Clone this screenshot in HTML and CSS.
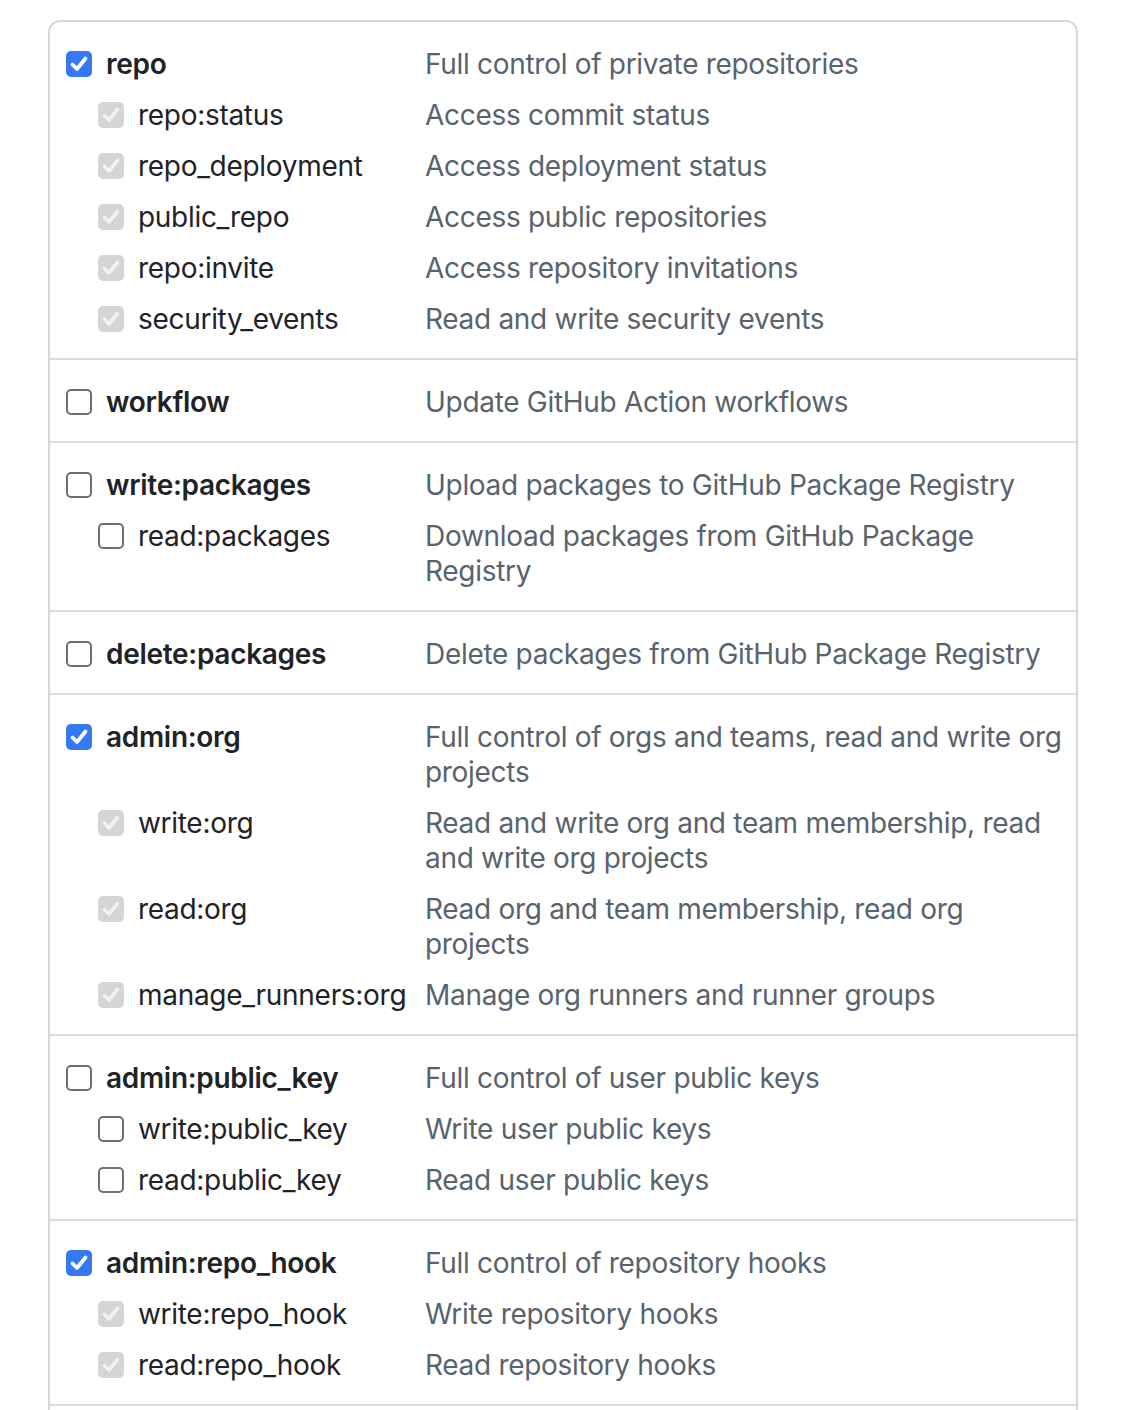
FILE: index.html
```html
<!DOCTYPE html>
<html>
<head>
<meta charset="utf-8">
<link rel="stylesheet" href="styles.css">
</head>
<body>
<div class="scopes">
  <div class="group">
    <div class="row top"><span class="cb checked"><svg viewBox="0 0 26 26"><path d="M6.5 13.5 L11 18 L19.5 7.5"/></svg></span><span class="label">repo</span><span class="desc">Full control of private repositories</span></div>
    <div class="row sub"><span class="cb disabled"><svg viewBox="0 0 26 26"><path d="M6.5 13.5 L11 18 L19.5 7.5"/></svg></span><span class="label">repo:status</span><span class="desc">Access commit status</span></div>
    <div class="row sub"><span class="cb disabled"><svg viewBox="0 0 26 26"><path d="M6.5 13.5 L11 18 L19.5 7.5"/></svg></span><span class="label">repo_deployment</span><span class="desc">Access deployment status</span></div>
    <div class="row sub"><span class="cb disabled"><svg viewBox="0 0 26 26"><path d="M6.5 13.5 L11 18 L19.5 7.5"/></svg></span><span class="label">public_repo</span><span class="desc">Access public repositories</span></div>
    <div class="row sub"><span class="cb disabled"><svg viewBox="0 0 26 26"><path d="M6.5 13.5 L11 18 L19.5 7.5"/></svg></span><span class="label">repo:invite</span><span class="desc">Access repository invitations</span></div>
    <div class="row sub"><span class="cb disabled"><svg viewBox="0 0 26 26"><path d="M6.5 13.5 L11 18 L19.5 7.5"/></svg></span><span class="label">security_events</span><span class="desc">Read and write security events</span></div>
  </div>
  <div class="group">
    <div class="row top"><span class="cb"></span><span class="label">workflow</span><span class="desc">Update GitHub Action workflows</span></div>
  </div>
  <div class="group">
    <div class="row top"><span class="cb"></span><span class="label">write:packages</span><span class="desc">Upload packages to GitHub Package Registry</span></div>
    <div class="row sub"><span class="cb"></span><span class="label">read:packages</span><span class="desc">Download packages from GitHub Package Registry</span></div>
  </div>
  <div class="group">
    <div class="row top"><span class="cb"></span><span class="label">delete:packages</span><span class="desc">Delete packages from GitHub Package Registry</span></div>
  </div>
  <div class="group">
    <div class="row top"><span class="cb checked"><svg viewBox="0 0 26 26"><path d="M6.5 13.5 L11 18 L19.5 7.5"/></svg></span><span class="label">admin:org</span><span class="desc">Full control of orgs and teams, read and write org projects</span></div>
    <div class="row sub"><span class="cb disabled"><svg viewBox="0 0 26 26"><path d="M6.5 13.5 L11 18 L19.5 7.5"/></svg></span><span class="label">write:org</span><span class="desc">Read and write org and team membership, read and write org projects</span></div>
    <div class="row sub"><span class="cb disabled"><svg viewBox="0 0 26 26"><path d="M6.5 13.5 L11 18 L19.5 7.5"/></svg></span><span class="label">read:org</span><span class="desc">Read org and team membership, read org projects</span></div>
    <div class="row sub"><span class="cb disabled"><svg viewBox="0 0 26 26"><path d="M6.5 13.5 L11 18 L19.5 7.5"/></svg></span><span class="label">manage_runners:org</span><span class="desc">Manage org runners and runner groups</span></div>
  </div>
  <div class="group">
    <div class="row top"><span class="cb"></span><span class="label">admin:public_key</span><span class="desc">Full control of user public keys</span></div>
    <div class="row sub"><span class="cb"></span><span class="label">write:public_key</span><span class="desc">Write user public keys</span></div>
    <div class="row sub"><span class="cb"></span><span class="label">read:public_key</span><span class="desc">Read user public keys</span></div>
  </div>
  <div class="group">
    <div class="row top"><span class="cb checked"><svg viewBox="0 0 26 26"><path d="M6.5 13.5 L11 18 L19.5 7.5"/></svg></span><span class="label">admin:repo_hook</span><span class="desc">Full control of repository hooks</span></div>
    <div class="row sub"><span class="cb disabled"><svg viewBox="0 0 26 26"><path d="M6.5 13.5 L11 18 L19.5 7.5"/></svg></span><span class="label">write:repo_hook</span><span class="desc">Write repository hooks</span></div>
    <div class="row sub"><span class="cb disabled"><svg viewBox="0 0 26 26"><path d="M6.5 13.5 L11 18 L19.5 7.5"/></svg></span><span class="label">read:repo_hook</span><span class="desc">Read repository hooks</span></div>
  </div>
  <div class="group group-empty"></div>
</div>
</body>
</html>
```

FILE: styles.css
```css
html, body {
  margin: 0;
  padding: 0;
  background: #ffffff;
}
body {
  font-family: Inter, "Noto Sans", "Liberation Sans", sans-serif;
  font-size: 28px;
  line-height: 35px;
  color: #1f2328;
  letter-spacing: -0.3px;
}
.scopes {
  margin: 20px 0 0 48px;
  width: 1026px;
  border: 2px solid #d1d9e0;
  border-radius: 12px;
}
.group {
  padding: 25px 8px 21px 16px;
  display: flex;
  flex-direction: column;
  gap: 16px;
}
.group + .group {
  border-top: 2px solid #d8dee4;
}
.group-empty {
  height: 60px;
}
.row {
  display: grid;
  grid-template-columns: 26px 305px 1fr;
  column-gap: 14px;
  align-items: start;
}
.row.sub {
  padding-left: 32px;
  grid-template-columns: 26px 273px 1fr;
}
.label {
  white-space: nowrap;
}
.row.top .label {
  font-weight: 600;
}
.desc {
  color: #59636e;
}
.cb {
  width: 26px;
  height: 26px;
  box-sizing: border-box;
  margin-top: 4px;
  border-radius: 5px;
  border: 2px solid #6f6f6f;
  background: #ffffff;
  display: flex;
  align-items: center;
  justify-content: center;
}
.cb svg {
  width: 26px;
  height: 26px;
  flex: none;
}
.cb svg path {
  fill: none;
  stroke: #ffffff;
  stroke-width: 3.8;
  stroke-linecap: round;
  stroke-linejoin: round;
}
.cb.checked {
  border: none;
  background: #3478f6;
}
.cb.disabled {
  border: none;
  background: #d5d5d5;
}
.cb.disabled svg path {
  stroke: #f1f1f1;
}
```
